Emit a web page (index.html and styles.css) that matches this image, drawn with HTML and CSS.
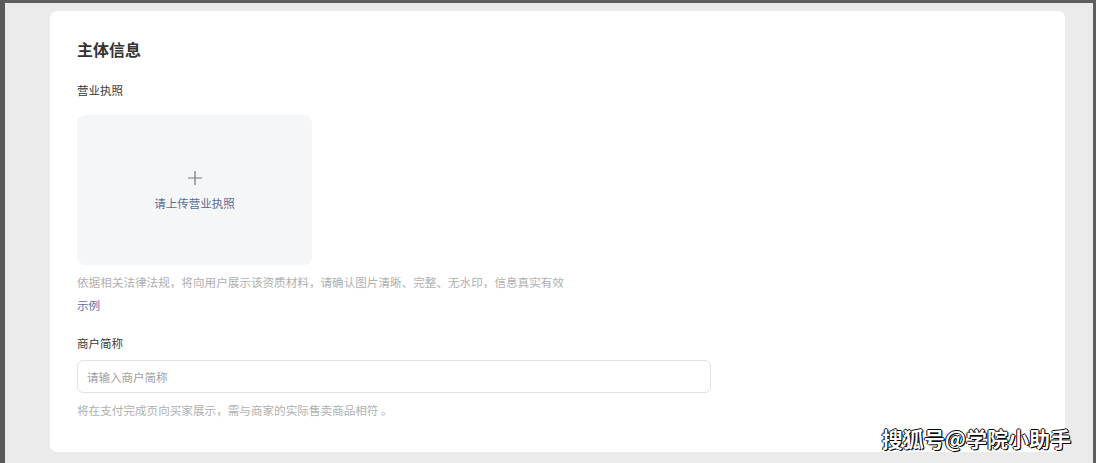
FILE: index.html
```html
<!DOCTYPE html>
<html lang="zh-CN">
<head>
    <meta charset="UTF-8">
    <meta name="viewport" content="width=device-width, initial-scale=1.0">
    <title>主体信息</title>
    <link rel="stylesheet" href="styles.css">
</head>
<body>
    <div class="frame">
        <div class="card">
            <h1>主体信息</h1>

            <div class="field">
                <div class="label">营业执照</div>
                <div class="upload-box">
                    <svg class="plus" width="16" height="16" viewBox="0 0 16 16">
                        <path d="M8 1v14M1 8h14" stroke="#777" stroke-width="1.2" fill="none"/>
                    </svg>
                    <div class="upload-text">请上传营业执照</div>
                </div>
                <div class="hint">依据相关法律法规，将向用户展示该资质材料，请确认图片清晰、完整、无水印，信息真实有效</div>
                <a class="link" href="#">示例</a>
            </div>

            <div class="field">
                <div class="label">商户简称</div>
                <input class="text-input" type="text" placeholder="请输入商户简称">
                <div class="hint">将在支付完成页向买家展示，需与商家的实际售卖商品相符 。</div>
            </div>

            <div class="watermark">搜狐号@学院小助手</div>
        </div>
    </div>
</body>
</html>
```

FILE: styles.css
```css
body {
    margin: 0;
    background: #ebebeb;
    font-family: "Noto Sans CJK SC", "Noto Sans", sans-serif;
}

.frame {
    height: 463px;
    box-sizing: border-box;
    border-top: 3px solid #5e5e5e;
    border-left: 5px solid #5a5a5a;
    border-right: 3px solid #5e5e5e;
    padding: 8px 28px 0 45px;
}

.card {
    position: relative;
    height: 441px;
    box-sizing: border-box;
    background: #fff;
    border-radius: 7px;
    padding: 26px 27px 0;
}

h1 {
    margin: 0 0 20px;
    font-size: 16px;
    line-height: 24px;
    font-weight: bold;
    color: #333;
}

.field {
    margin-bottom: 20px;
}

.label {
    font-size: 11.5px;
    line-height: 18px;
    color: #3a3a3a;
    margin-bottom: 16px;
}

.upload-box {
    width: 235px;
    height: 150px;
    background: #f5f6f8;
    border-radius: 8px;
    display: flex;
    flex-direction: column;
    align-items: center;
    justify-content: center;
}

.plus {
    margin-top: 2px;
}

.upload-text {
    margin-top: 8px;
    font-size: 11.5px;
    line-height: 18px;
    color: #5a6b96;
}

.hint {
    margin-top: 8px;
    font-size: 11.6px;
    line-height: 18px;
    color: #b0b0b0;
}

.link {
    display: block;
    margin-top: 5px;
    font-size: 11.6px;
    line-height: 18px;
    color: #5670a8;
    text-decoration: none;
}

.text-input {
    display: block;
    width: 634px;
    height: 33px;
    box-sizing: border-box;
    border: 1px solid #e2e2e2;
    border-radius: 6px;
    padding: 0 9px;
    margin-top: -8px;
    font-family: inherit;
    font-size: 11.5px;
    color: #333;
    outline: none;
}

.text-input::placeholder {
    color: #a0a0a0;
}

.watermark {
    position: absolute;
    right: -6px;
    bottom: 0;
    font-size: 21px;
    font-weight: bold;
    line-height: 28px;
    color: #fff;
    text-shadow: 1px 1px 0 #000, -1px 0 0 #000, 0 -1px 0 #000, 1px 0 0 #000;
}
```
